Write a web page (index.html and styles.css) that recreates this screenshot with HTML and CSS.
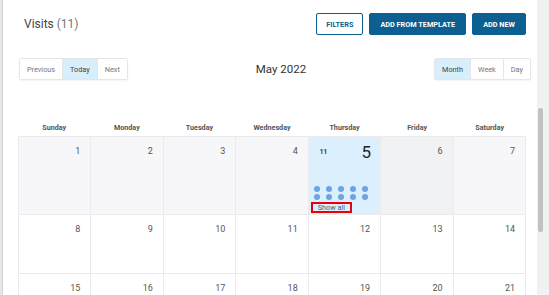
FILE: index.html
```html
<!DOCTYPE html>
<html lang="en">
<head>
    <meta charset="UTF-8">
    <meta name="viewport" content="width=device-width, initial-scale=1">
    <title>Visits</title>
    <link rel="stylesheet" href="styles.css">
</head>
<body>
    <div class="frame-edge"></div>

    <div class="page">
        <div class="page-header">
            <h2 class="title">Visits <span class="count">(11)</span></h2>
            <div class="actions">
                <button class="btn btn-outline">FILTERS</button>
                <button class="btn btn-primary">ADD FROM TEMPLATE</button>
                <button class="btn btn-primary">ADD NEW</button>
            </div>
        </div>

        <div class="toolbar">
            <div class="btn-group">
                <button class="group-btn">Previous</button>
                <button class="group-btn active">Today</button>
                <button class="group-btn">Next</button>
            </div>
            <div class="toolbar-title">May 2022</div>
            <div class="btn-group">
                <button class="group-btn active">Month</button>
                <button class="group-btn">Week</button>
                <button class="group-btn">Day</button>
            </div>
        </div>

        <div class="calendar">
            <div class="cal-head">
                <div>Sunday</div>
                <div>Monday</div>
                <div>Tuesday</div>
                <div>Wednesday</div>
                <div>Thursday</div>
                <div>Friday</div>
                <div>Saturday</div>
            </div>
            <div class="cal-body">
                <div class="day past"><span class="num">1</span></div>
                <div class="day past"><span class="num">2</span></div>
                <div class="day past"><span class="num">3</span></div>
                <div class="day past"><span class="num">4</span></div>
                <div class="day today">
                    <div class="today-top">
                        <span class="visit-count">11</span>
                        <span class="big-num">5</span>
                    </div>
                    <div class="dots">
                        <span></span><span></span><span></span><span></span><span></span>
                        <span></span><span></span><span></span><span></span><span></span>
                    </div>
                    <a class="show-all">Show all</a>
                </div>
                <div class="day hover"><span class="num">6</span></div>
                <div class="day past"><span class="num">7</span></div>

                <div class="day"><span class="num">8</span></div>
                <div class="day"><span class="num">9</span></div>
                <div class="day"><span class="num">10</span></div>
                <div class="day"><span class="num">11</span></div>
                <div class="day"><span class="num">12</span></div>
                <div class="day"><span class="num">13</span></div>
                <div class="day"><span class="num">14</span></div>

                <div class="day"><span class="num">15</span></div>
                <div class="day"><span class="num">16</span></div>
                <div class="day"><span class="num">17</span></div>
                <div class="day"><span class="num">18</span></div>
                <div class="day"><span class="num">19</span></div>
                <div class="day"><span class="num">20</span></div>
                <div class="day"><span class="num">21</span></div>
            </div>
        </div>
    </div>

    <div class="scrollbar">
        <div class="thumb"></div>
    </div>
</body>
</html>
```

FILE: styles.css
```css
body {
    font-family: Roboto, "Liberation Sans", sans-serif;
    background-color: #ffffff;
    margin: 0;
    height: 295px;
    overflow: hidden;
    display: flex;
    color: #444;
}

.frame-edge {
    width: 2px;
    background-color: #e6e6e6;
    border-right: 1px solid #d2d2d2;
}

.page {
    flex: 1;
    padding: 13px 6px 0 15px;
    min-width: 0;
}

.page-header {
    display: flex;
    justify-content: space-between;
    align-items: center;
    height: 22px;
    margin-right: 5px;
}

.title {
    margin: 0 0 0 6px;
    font-size: 12px;
    font-weight: 400;
    color: #444;
}

.count {
    color: #777;
}

.actions {
    display: flex;
    gap: 6px;
}

.btn {
    height: 22px;
    padding: 0 10px;
    font-family: inherit;
    font-size: 7.3px;
    font-weight: 700;
    border-radius: 2px;
    cursor: pointer;
}

.btn-outline {
    background-color: #ffffff;
    color: #0b5f91;
    border: 1px solid #0b5f91;
    padding: 0 9px;
}

.btn-primary {
    background-color: #0b5f91;
    color: #ffffff;
    border: 1px solid #0b5f91;
}

.toolbar {
    display: flex;
    justify-content: space-between;
    align-items: center;
    margin-top: 23px;
    padding-left: 1px;
}

.btn-group {
    display: flex;
    border: 1px solid #e4e6ea;
    border-radius: 2px;
    box-shadow: 0 1px 2px rgba(0, 0, 0, 0.05);
}

.group-btn {
    height: 20px;
    padding: 0 7px;
    border: none;
    border-left: 1px solid #e4e6ea;
    background-color: #ffffff;
    font-family: inherit;
    font-size: 7.3px;
    color: #777;
}

.group-btn:first-child {
    border-left: none;
}

.group-btn.active {
    background-color: #d8eefb;
    color: #444;
}

.toolbar-title {
    font-size: 11.5px;
    color: #333;
}

.calendar {
    margin-top: 40px;
    margin-right: 5px;
}

.cal-head {
    display: grid;
    grid-template-columns: repeat(7, 1fr);
    height: 16px;
    line-height: 16px;
    font-size: 7.2px;
    font-weight: 700;
    color: #555;
    text-align: center;
}

.cal-body {
    display: grid;
    grid-template-columns: repeat(7, 1fr);
    grid-template-rows: 78px 59px 59px;
    border-top: 1px solid #eaebee;
    border-left: 1px solid #eaebee;
}

.day {
    border-right: 1px solid #eaebee;
    border-bottom: 1px solid #eaebee;
    padding: 9px 10px 0 0;
    text-align: right;
    font-size: 9px;
    color: #555;
}

.day.past {
    background-color: #f7f7f9;
}

.day.hover {
    background-color: #f1f2f4;
}

.day.today {
    background-color: #dbeffc;
    padding: 5px 9px 1px 2px;
    display: flex;
    flex-direction: column;
    text-align: left;
}

.today-top {
    display: flex;
    justify-content: space-between;
    align-items: center;
    padding-left: 9px;
}

.visit-count {
    font-size: 6.5px;
    font-weight: 700;
    color: #333;
}

.big-num {
    font-size: 17px;
    color: #222;
}

.dots {
    display: grid;
    grid-template-columns: repeat(5, 6px);
    gap: 2.5px 6px;
    margin-top: auto;
    padding-left: 3px;
}

.dots span {
    width: 6px;
    height: 6px;
    border-radius: 50%;
    background-color: #6fa3e3;
}

.show-all {
    align-self: flex-start;
    margin-top: 2px;
    padding: 0 5px;
    height: 7px;
    line-height: 7px;
    border: 2px solid #e8000b;
    font-size: 7.3px;
    color: #556070;
}

.scrollbar {
    width: 12px;
    background-color: #f1f1f1;
}

.thumb {
    width: 5px;
    height: 124px;
    margin: 108px 0 0 1px;
    border-radius: 2px;
    background-color: #c1c1c1;
}
```
